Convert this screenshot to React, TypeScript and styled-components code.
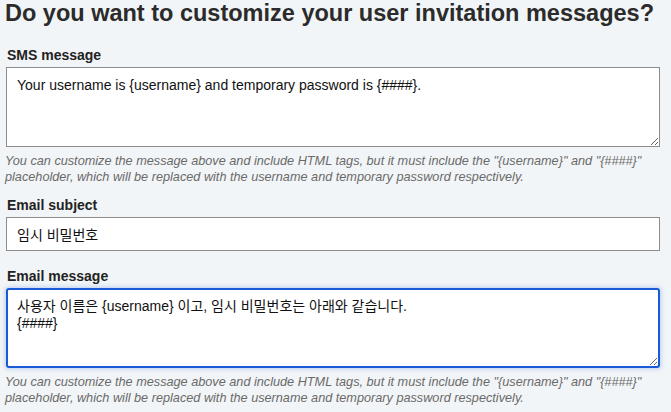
import { createGlobalStyle, styled } from 'styled-components'

const COLOR_PAGE = '#f2f5f7'
const COLOR_BORDER = '#8d8d8d'
const COLOR_FOCUS = '#1a5ad7'

const GlobalStyle = createGlobalStyle`
  html, body {
    margin: 0;
    padding: 0;
    background: ${COLOR_PAGE};
  }
  body {
    font-family: 'Liberation Sans', Arial, 'Noto Sans CJK KR', sans-serif;
    color: #222;
  }
`

const Page = styled.div`
  width: 654px;
  padding: 0 11px 0 6px;
`

const Title = styled.h1`
  font-size: 23.5px;
  font-weight: bold;
  color: #2b2b2b;
  margin: 0 0 0 -1px;
  line-height: 26px;
  white-space: nowrap;
`

const Field = styled.div<{ $top: number }>`
  display: flex;
  flex-direction: column;
  margin-top: ${(p) => p.$top}px;
`

const Label = styled.label`
  font-size: 14px;
  font-weight: bold;
  line-height: 16px;
  color: #222;
  margin: 0 0 4px 1px;
`

const TextArea = styled.textarea<{ $focused?: boolean }>`
  box-sizing: border-box;
  width: 654px;
  height: 80px;
  margin: 0;
  padding: 9px 10px;
  font-family: 'Liberation Sans', Arial, 'Noto Sans CJK KR', sans-serif;
  font-size: 14px;
  line-height: 17px;
  color: #111;
  background: #fff;
  border: 1px solid ${COLOR_BORDER};
  border-radius: 0;
  outline: none;
  resize: vertical;
  ${(p) =>
    p.$focused
      ? `
    border: 2px solid ${COLOR_FOCUS};
    border-radius: 3px;
    padding: 8px 9px;
    box-shadow: 0 0 4px 1px rgba(120, 160, 230, 0.45);
  `
      : ''}
`

const TextInput = styled.input`
  box-sizing: border-box;
  width: 654px;
  height: 34px;
  margin: 0;
  padding: 0 10px;
  font-family: 'Liberation Sans', Arial, 'Noto Sans CJK KR', sans-serif;
  font-size: 14px;
  color: #111;
  background: #fff;
  border: 1px solid ${COLOR_BORDER};
  border-radius: 0;
  outline: none;
`

const Help = styled.p`
  font-size: 12.7px;
  font-style: italic;
  line-height: 16px;
  color: #6a6a6a;
  margin: 6px 0 0 -1px;
  width: 660px;
`

const HELP_TEXT =
  'You can customize the message above and include HTML tags, but it must include the "{username}" and "{####}" placeholder, which will be replaced with the username and temporary password respectively.'

export default function App() {
  return (
    <Page>
      <GlobalStyle />
      <Title>Do you want to customize your user invitation messages?</Title>
      <Field $top={21}>
        <Label htmlFor="sms">SMS message</Label>
        <TextArea
          id="sms"
          spellCheck={false}
          defaultValue="Your username is {username} and temporary password is {####}."
        />
        <Help>{HELP_TEXT}</Help>
      </Field>
      <Field $top={12}>
        <Label htmlFor="subject">Email subject</Label>
        <TextInput id="subject" spellCheck={false} defaultValue="임시 비밀번호" />
      </Field>
      <Field $top={17}>
        <Label htmlFor="email">Email message</Label>
        <TextArea
          id="email"
          $focused
          spellCheck={false}
          defaultValue={'사용자 이름은 {username} 이고, 임시 비밀번호는 아래와 같습니다.\n{####}'}
        />
        <Help>{HELP_TEXT}</Help>
      </Field>
    </Page>
  )
}
